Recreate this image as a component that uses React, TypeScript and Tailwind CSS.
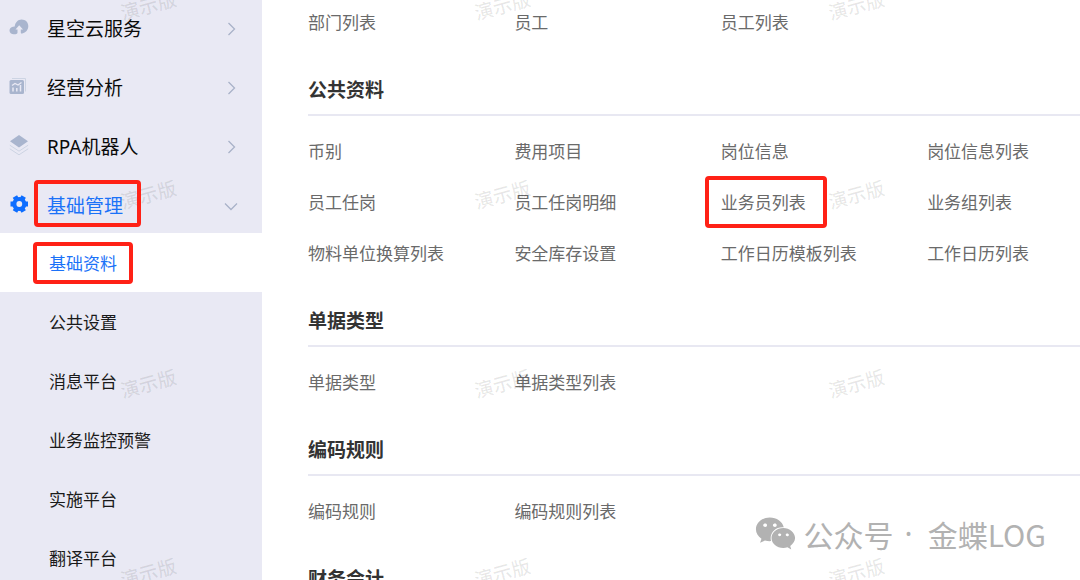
import clsx from "clsx";
import { FaWeixin } from "react-icons/fa";

const menu = [
  { label: "星空云服务", icon: <CloudIcon /> },
  { label: "经营分析", icon: <ReportIcon /> },
  { label: "RPA机器人", icon: <LayersIcon /> },
  { label: "基础管理", icon: <GearIcon />, open: true },
];

const submenu = [
  "基础资料",
  "公共设置",
  "消息平台",
  "业务监控预警",
  "实施平台",
  "翻译平台",
];

const sections = [
  { title: "", links: ["部门列表", "员工", "员工列表"] },
  {
    title: "公共资料",
    links: [
      "币别",
      "费用项目",
      "岗位信息",
      "岗位信息列表",
      "员工任岗",
      "员工任岗明细",
      "业务员列表",
      "业务组列表",
      "物料单位换算列表",
      "安全库存设置",
      "工作日历模板列表",
      "工作日历列表",
    ],
  },
  { title: "单据类型", links: ["单据类型", "单据类型列表"] },
  { title: "编码规则", links: ["编码规则", "编码规则列表"] },
  { title: "财务会计", links: [] },
];

function CloudIcon() {
  return (
    <svg viewBox="0 0 20 16" className="h-4 w-5" fill="#a9b5ce">
      <path d="M4.800 15.200C2.300 15.200.5 13.600.5 11.500c0-2 1.500-3.500 3.400-3.800l1.800-.2C6.300 3.400 9 .6 12.600.6c3.800 0 6.700 2.800 6.700 6.500 0 3.800-2.500 6.700-6 7.500-.9.200-1.500-.3-1.500-1.100V10.500h2.200L10.200 6.300 6.500 10.500h2v3c0 1.200-.9 1.700-2.100 1.700z" />
    </svg>
  );
}

function ReportIcon() {
  return (
    <svg viewBox="0 0 20 18" className="h-[18px] w-5">
      <path d="M3 1.500h13.500v13" fill="none" stroke="#cdd4e3" strokeWidth="1" />
      <rect x=".5" y="3" width="14.500" height="14" rx="1.500" fill="#a9b5ce" />
      <path d="M3 8.500 6 6.500l3 1.500 3.500-2.500" fill="none" stroke="#e9e9f4" strokeWidth="1.300" />
      <path d="M4 14.500v-4M7.800 14.500v-3.500M11.500 14.500V8" stroke="#e9e9f4" strokeWidth="1.500" />
    </svg>
  );
}

function LayersIcon() {
  return (
    <svg viewBox="0 0 20 22" className="h-[22px] w-5">
      <path d="M10 1 19 7.200l-9 6.300-9-6.300z" fill="#a9b5ce" />
      <path d="m.8 11.200 9.200 6 9.200-6M.8 14.800l9.200 6 9.200-6" fill="none" stroke="#cdd4e3" strokeWidth="1" />
    </svg>
  );
}

function GearIcon() {
  return (
    <svg viewBox="0 0 20 20" className="size-5">
      <g stroke="#0d6dff" strokeWidth="5">
        <path d="M1.500 10h17.500" />
        <path d="M1.500 10h17.500" transform="rotate(60 10.300 10)" />
        <path d="M1.500 10h17.500" transform="rotate(120 10.300 10)" />
      </g>
      <circle cx="10.300" cy="10" r="7.100" fill="#0d6dff" />
      <circle cx="10.300" cy="10" r="2.900" fill="#e9e9f4" />
    </svg>
  );
}

function Chevron({ open }: { open?: boolean }) {
  return (
    <svg
      viewBox="0 0 14 14"
      className={clsx("size-[14px]", open && "rotate-90")}
      fill="none"
      stroke="#a9b2c8"
      strokeWidth="1.300"
    >
      <path d="m4.500 1 6 6-6 6" />
    </svg>
  );
}

function Marker({ className }: { className: string }) {
  return (
    <span
      className={clsx(
        "pointer-events-none absolute z-20 rounded-[4px] border-4 border-[#ff2116]",
        className,
      )}
    />
  );
}

function Sidebar() {
  return (
    <nav className="w-[262px] shrink-0 bg-[#e9e9f4]">
      {menu.map((item) => (
        <button
          key={item.label}
          className={clsx(
            "flex h-[59px] w-full items-center pr-6 pl-[9px] text-left text-[19px] leading-7",
            item.open ? "text-[#1b72f8]" : "text-[#0a0a0a]",
          )}
        >
          <span className="flex w-[38px]">{item.icon}</span>
          <span className="relative mt-1">
            {item.label}
            {item.open && <Marker className="-top-3 -right-[18px] -bottom-[7px] -left-[13px]" />}
          </span>
          <span className="mt-1 ml-auto">
            <Chevron open={item.open} />
          </span>
        </button>
      ))}
      {submenu.map((label, i) => (
        <a
          key={label}
          href="#"
          className={clsx(
            "flex h-[59px] items-center pt-[2px] pl-[49px] text-[17px] leading-7",
            i === 0 ? "bg-white text-[#1b72f8]" : "text-[#1a1a1a]",
          )}
        >
          <span className="relative">
            {label}
            {i === 0 && <Marker className="-inset-x-4 -top-2 -bottom-[6px]" />}
          </span>
        </a>
      ))}
    </nav>
  );
}

function Watermark() {
  return (
    <div
      aria-hidden="true"
      className="pointer-events-none absolute -top-[88px] -left-7 grid grid-cols-[repeat(3,354px)] text-[19px] font-medium text-black/9"
    >
      {Array.from({ length: 12 }, (_, i) => (
        <span key={i} className="flex h-[189px] items-center justify-center">
          <span className="-rotate-15">演示版</span>
        </span>
      ))}
    </div>
  );
}

export default function App() {
  return (
    <div className="relative h-screen overflow-hidden bg-white font-['Noto_Sans','Noto_Sans_CJK_SC',sans-serif]">
      <div className="-mt-[3px] flex">
        <Sidebar />
        <main className="min-w-0 grow pl-[46px]">
          {sections.map((section) => (
            <section key={section.title}>
              {section.title && (
                <h2 className="mb-[10px] border-b-2 border-[#e8e8f2] pt-7 pb-[10px] text-[19px] leading-7 font-bold text-[#333]">
                  {section.title}
                </h2>
              )}
              <div className="grid grid-cols-[repeat(3,27fr)_20fr]">
                {section.links.map((label) => (
                  <a
                    key={label}
                    href="#"
                    className="flex h-[51px] items-center text-[17px] leading-7 text-[#6a6a6a]"
                  >
                    <span className="relative whitespace-nowrap">
                      {label}
                      {label === "业务员列表" && (
                        <Marker className="-top-[13px] -right-[21px] -bottom-[11px] -left-4" />
                      )}
                    </span>
                  </a>
                ))}
              </div>
            </section>
          ))}
        </main>
      </div>
      <Watermark />
      <div className="absolute right-[34px] bottom-[26px] flex items-center text-[30px] leading-10 text-[#b2b2b2]">
        <FaWeixin className="mr-2 size-[41px]" />
        <p className="flex gap-[11px] font-['Noto_Sans_CJK_SC',sans-serif]">
          <span>公众号</span>
          <span className="mr-1 font-['Noto_Sans',sans-serif]">·</span>
          <span>金蝶LOG</span>
        </p>
      </div>
    </div>
  );
}
